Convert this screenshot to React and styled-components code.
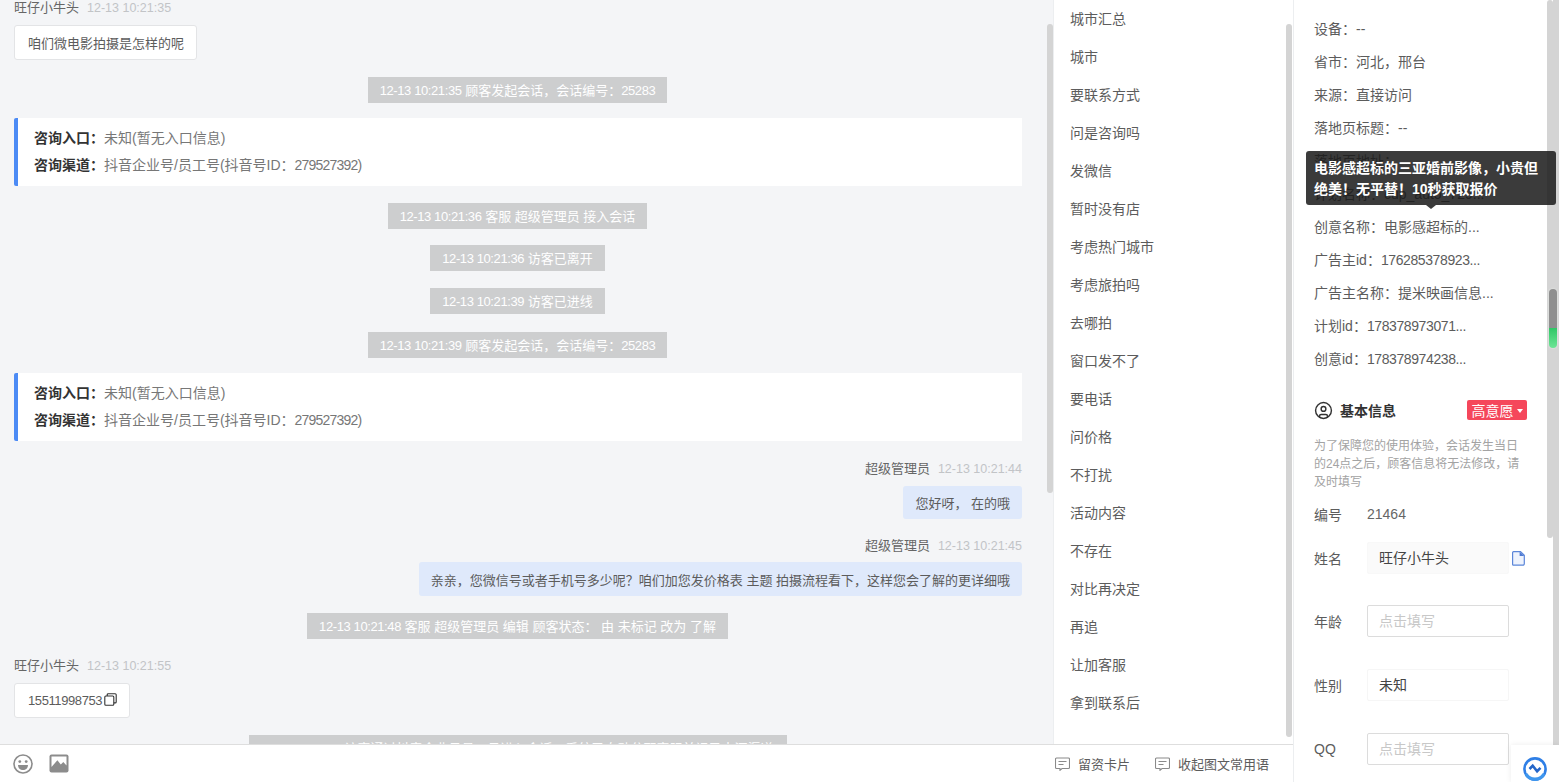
import React from "react";
import styled, { createGlobalStyle } from "styled-components";
import { CircleUser } from "lucide-react";

const GlobalStyle = createGlobalStyle`
  html, body {
    margin: 0;
    padding: 0;
    height: 100%;
    overflow: hidden;
    background: #fff;
  }
  * {
    box-sizing: border-box;
  }
  body {
    font-family: "Liberation Sans", "Noto Sans CJK SC", sans-serif;
    color: #5c5c5c;
  }
`;

const QUICK_PHRASES = [
  "城市汇总", "城市", "要联系方式", "问是咨询吗", "发微信", "暂时没有店", "考虑热门城市", "考虑旅拍吗", "去哪拍",
  "窗口发不了", "要电话", "问价格", "不打扰", "活动内容", "不存在", "对比再决定", "再追", "让加客服", "拿到联系后",
];

const SOURCE_INFO = [
  ["设备：", "--"],
  ["省市：", "河北，邢台"],
  ["来源：", "直接访问"],
  ["落地页标题：", "--"],
  ["落地页地址：", ""],
  ["计划名称：", "cup_auto_729..."],
  ["创意名称：", "电影感超标的..."],
  ["广告主id：", "176285378923...", true],
  ["广告主名称：", "提米映画信息..."],
  ["计划id：", "178378973071...", true],
  ["创意id：", "178378974238...", true],
];

const Page = styled.div`
  position: relative;
  display: flex;
  width: 1559px;
  height: 782px;
  overflow: hidden;
`;

const Workspace = styled.div`
  display: flex;
  flex-direction: column;
  width: 1293px;
  height: 100%;
`;

const TopRow = styled.div`
  display: flex;
  height: 744px;
`;

const Chat = styled.div`
  width: 1047px;
  height: 100%;
  padding: 0 25px 0 14px;
  overflow: hidden;
  background: #f4f5f7;
  display: flex;
  flex-direction: column;
  align-items: flex-start;
`;

const Rail = styled.div`
  flex: none;
  width: 6px;
  height: 100%;
  padding-top: ${(p) => p.$top || 0}px;
  background: ${(p) => p.$bg || "#fff"};
`;

const Thumb = styled.div`
  height: ${(p) => p.$h}px;
  background: #d4d4d4;
  border-radius: ${(p) => p.$radius ?? 3}px;
`;

const Num = styled.span`
  letter-spacing: ${(p) => (p.$tight ? "-0.8px" : "-0.4px")};
`;

const Sender = styled.div`
  flex: none;
  display: flex;
  gap: 8px;
  height: 16px;
  line-height: 16px;
  margin-top: ${(p) => p.$mt || 0}px;
  align-self: ${(p) => (p.$mine ? "flex-end" : "flex-start")};
  font-size: 13px;
  color: #666;
`;

const Stamp = styled.span`
  font-size: 12.5px;
  color: #c2c4c7;
`;

const Bubble = styled.div`
  flex: none;
  display: flex;
  align-items: center;
  height: ${(p) => p.$h || 35}px;
  margin-top: ${(p) => p.$mt || 9}px;
  padding: ${(p) => (p.$mine ? "0 12px" : "0 12px 0 13px")};
  font-size: 13px;
  white-space: pre;
  color: #5c5c5c;
  border-radius: 3px;
  background: ${(p) => (p.$mine ? "#dfe9fb" : "#fff")};
  border: ${(p) => (p.$mine ? "none" : "1px solid #e3e4e6")};
  align-self: ${(p) => (p.$mine ? "flex-end" : "flex-start")};
`;

const SystemPill = styled.div`
  flex: none;
  align-self: center;
  height: 26px;
  line-height: 27px;
  margin-top: ${(p) => p.$mt || 16}px;
  margin-left: -1px;
  padding: 0 12px;
  font-size: 13px;
  white-space: pre;
  color: #fff;
  background: #cdcecf;
`;

const LastPill = styled(SystemPill)`
  width: 538px;
  padding-left: 96px;
`;

const EntryCard = styled.div`
  flex: none;
  width: 100%;
  height: 68px;
  margin-top: 15px;
  padding: 7px 0 0 16px;
  background: #fff;
  border-left: 4px solid #4c8bf5;
  border-radius: 2px 0 0 2px;
`;

const EntryLine = styled.div`
  height: 27px;
  line-height: 27px;
  font-size: 14px;
  white-space: pre;
  color: #777;
`;

const EntryLabel = styled.b`
  font-weight: 700;
  color: #333;
`;

const PhraseList = styled.div`
  width: 233px;
  height: 100%;
  padding-left: 16px;
  background: #fff;
  border-left: 1px solid #eceef0;
  overflow: hidden;
`;

const Phrase = styled.div`
  height: 38px;
  line-height: 38px;
  font-size: 14px;
  color: #5c5c5c;
`;

const BottomBar = styled.div`
  flex: 1;
  display: flex;
  align-items: center;
  padding: 0 24px 0 13px;
  background: #fff;
  border-top: 1px solid #dedede;
`;

const MediaTools = styled.div`
  display: flex;
  align-items: center;
  gap: 16px;
`;

const ToolLink = styled.div`
  display: flex;
  align-items: center;
  gap: 8px;
  margin-left: ${(p) => p.$ml || 0}px;
  font-size: 13px;
  color: #5c5c5c;
  white-space: nowrap;
`;

const Spacer = styled.div`
  flex: 1;
`;

const RightArea = styled.div`
  display: flex;
  width: 266px;
  height: 100%;
`;

const InfoPanel = styled.div`
  width: 254px;
  height: 100%;
  padding: 13px 0 0 20px;
  background: #fff;
  border-left: 1px solid #eceef0;
  overflow: hidden;
`;

const InfoRow = styled.div`
  height: 33px;
  line-height: 33px;
  font-size: 14px;
  white-space: pre;
  color: #5c5c5c;
`;

const SectionHead = styled.div`
  display: flex;
  align-items: center;
  width: 213px;
  height: 20px;
  margin-top: 24px;
`;

const SectionTitle = styled.div`
  flex: 1;
  margin-left: 7px;
  font-size: 14px;
  font-weight: 700;
  color: #333;
`;

const IntentTag = styled.div`
  display: flex;
  align-items: center;
  justify-content: center;
  gap: 3px;
  width: 60px;
  height: 20px;
  font-size: 14px;
  color: #fff;
  background: #f5475b;
  border-radius: 2px;
`;

const Caret = styled.span`
  width: 0;
  height: 0;
  margin-top: 1px;
  border-left: 3.5px solid transparent;
  border-right: 3.5px solid transparent;
  border-top: 4px solid #fff;
`;

const Note = styled.div`
  width: 213px;
  margin-top: 17px;
  font-size: 12px;
  line-height: 18px;
  color: #a3a3a3;
`;

const FieldRow = styled.div`
  display: flex;
  align-items: center;
  height: ${(p) => p.$h || 32}px;
  margin-top: ${(p) => p.$mt}px;
  font-size: 14px;
  color: #5c5c5c;
`;

const FieldLabel = styled.div`
  width: 53px;
  flex: none;
`;

const FieldBox = styled.div`
  width: 142px;
  height: 32px;
  line-height: 30px;
  padding-left: 11px;
  border-radius: 2px;
  border: 1px solid ${(p) => p.$line};
  background: ${(p) => p.$fill || "#fff"};
  color: ${(p) => (p.$empty ? "#c8c8c8" : "#444")};
`;

const PlainValue = styled.div`
  color: #666;
`;

const DocIcon = styled.svg`
  width: 13px;
  height: 15px;
  margin-left: 3px;
`;

const CopyIcon = styled.svg`
  flex: none;
  width: 13px;
  height: 13px;
  margin: -3px 0 0 2px;
`;

const GreenGauge = styled.div`
  position: absolute;
  left: 1549px;
  top: 289px;
  width: 8px;
  height: 59px;
  border-radius: 4px;
  box-shadow: 0 0 2px #eef5ef;
  background: linear-gradient(#8f8f8f 0, #8f8f8f 39px, #2fc766 39px, #6ee596 100%);
`;

const Tooltip = styled.div`
  position: absolute;
  left: 1306px;
  top: 151px;
  width: 250px;
  height: 54px;
  padding: 7px 14px 0 8px;
  font-size: 14px;
  font-weight: 700;
  line-height: 21px;
  color: #fff;
  background: rgba(25, 25, 25, 0.85);
  border-radius: 3px;
  &::after {
    content: "";
    position: absolute;
    left: 120px;
    bottom: -4px;
    border-left: 5px solid transparent;
    border-right: 5px solid transparent;
    border-top: 4px solid rgba(25, 25, 25, 0.85);
  }
`;

const ChatWidget = styled.div`
  position: absolute;
  left: 1511px;
  top: 745px;
  width: 48px;
  height: 37px;
  display: flex;
  align-items: flex-start;
  justify-content: center;
  padding-top: 12px;
  background: #fff;
  box-shadow: 0 0 6px rgba(0, 0, 0, 0.08);
`;

const EmojiIcon = () => (
  <svg width="20" height="20" viewBox="0 0 20 20">
    <circle cx="10" cy="10" r="9" fill="none" stroke="#8c8c8c" strokeWidth="1.6" />
    <circle cx="6.8" cy="7.6" r="1.4" fill="#8c8c8c" />
    <circle cx="13.2" cy="7.6" r="1.4" fill="#8c8c8c" />
    <path d="M5 11h10c0 3-2.2 5-5 5s-5-2-5-5z" fill="#8c8c8c" />
  </svg>
);

const PictureIcon = () => (
  <svg width="20" height="19" viewBox="0 0 20 19">
    <rect x="0.5" y="0.5" width="19" height="18" rx="2" fill="#8c8c8c" />
    <path d="M2.5 2.5h15v9l-3.2-3.4-2.5 2.4-3.4-4.2-5.9 6.6z" fill="#fff" />
  </svg>
);

const NoteIcon = () => (
  <svg width="15" height="14" viewBox="0 0 15 14" fill="none" stroke="#8a8a8a" strokeWidth="1.1">
    <path d="M1.5 1h12a1 1 0 0 1 1 1v8.5a1 1 0 0 1-1 1H7l-2 1.8v-1.8H1.5a1 1 0 0 1-1-1V2a1 1 0 0 1 1-1z" />
    <path d="M3.5 4.5h8M3.5 7.5h5" />
  </svg>
);

const WidgetLogo = () => (
  <svg width="24" height="24" viewBox="0 0 24 24" fill="none">
    <circle cx="12" cy="12" r="10.6" stroke="#2f7fe6" strokeWidth="2.6" />
    <path d="M3 17a10.4 10.4 0 0 0 18 0" stroke="#3f97ee" strokeWidth="3.4" />
    <path d="M6.5 12l3.2-3.2 4.4 5.4 3.4-3.4" stroke="#2466c9" strokeWidth="2.6" />
  </svg>
);

const InfoSection = () => (
  <InfoPanel>
    {SOURCE_INFO.map(([label, value, numeric]) => (
      <InfoRow key={label}>{label}{numeric ? <Num>{value}</Num> : value}</InfoRow>
    ))}
    <SectionHead>
      <CircleUser size={19} color="#333" strokeWidth={1.8} />
      <SectionTitle>基本信息</SectionTitle>
      <IntentTag>高意愿<Caret /></IntentTag>
    </SectionHead>
    <Note>为了保障您的使用体验，会话发生当日的24点之后，顾客信息将无法修改，请及时填写</Note>
    <FieldRow $h={20} $mt={13}>
      <FieldLabel>编号</FieldLabel>
      <PlainValue>21464</PlainValue>
    </FieldRow>
    <FieldRow $mt={18}>
      <FieldLabel>姓名</FieldLabel>
      <FieldBox $line="#f8f8f8" $fill="#fafafa">旺仔小牛头</FieldBox>
      <DocIcon viewBox="0 0 13 15">
        <path d="M1.5.7h7l3.8 3.6v8.5a1.4 1.4 0 0 1-1.4 1.4H1.5A1 1 0 0 1 .6 13V1.6A1 1 0 0 1 1.5.7z" fill="#eef3fd" stroke="#5b86d9" strokeWidth="1.2" />
        <path d="M7.6.7l4.7 4.4H7.6z" fill="#4f7bd3" />
      </DocIcon>
    </FieldRow>
    <FieldRow $mt={31}>
      <FieldLabel>年龄</FieldLabel>
      <FieldBox $line="#dcdcdc" $empty>点击填写</FieldBox>
    </FieldRow>
    <FieldRow $mt={32}>
      <FieldLabel>性别</FieldLabel>
      <FieldBox $line="#f6f6f6">未知</FieldBox>
    </FieldRow>
    <FieldRow $mt={32}>
      <FieldLabel>QQ</FieldLabel>
      <FieldBox $line="#dcdcdc" $empty>点击填写</FieldBox>
    </FieldRow>
  </InfoPanel>
);

const EntryInfo = () => (
  <EntryCard>
    <EntryLine><EntryLabel>咨询入口：</EntryLabel>未知(暂无入口信息)</EntryLine>
    <EntryLine><EntryLabel>咨询渠道：</EntryLabel>抖音企业号/员工号(抖音号ID：<Num $tight>279527392</Num>)</EntryLine>
  </EntryCard>
);

export default function App() {
  return (
    <>
      <GlobalStyle />
      <Page>
        <Workspace>
          <TopRow>
            <Chat>
              <Sender>旺仔小牛头<Stamp>12-13 10:21:35</Stamp></Sender>
              <Bubble>咱们微电影拍摄是怎样的呢</Bubble>
              <SystemPill $mt={17}><Num>12-13 10:21:35</Num> 顾客发起会话，会话编号：<Num>25283</Num></SystemPill>
              <EntryInfo />
              <SystemPill $mt={17}><Num>12-13 10:21:36</Num> 客服 超级管理员 接入会话</SystemPill>
              <SystemPill><Num>12-13 10:21:36</Num> 访客已离开</SystemPill>
              <SystemPill $mt={17}><Num>12-13 10:21:39</Num> 访客已进线</SystemPill>
              <SystemPill $mt={18}><Num>12-13 10:21:39</Num> 顾客发起会话，会话编号：<Num>25283</Num></SystemPill>
              <EntryInfo />
              <Sender $mine $mt={20}>超级管理员<Stamp>12-13 10:21:44</Stamp></Sender>
              <Bubble $mine $h={33}>您好呀， 在的哦</Bubble>
              <Sender $mine $mt={19}>超级管理员<Stamp>12-13 10:21:45</Stamp></Sender>
              <Bubble $mine $h={34} $mt={8}>亲亲，您微信号或者手机号多少呢？咱们加您发价格表 主题 拍摄流程看下，这样您会了解的更详细哦</Bubble>
              <SystemPill $mt={17}><Num>12-13 10:21:48</Num> 客服 超级管理员 编辑 顾客状态： 由 未标记 改为 了解</SystemPill>
              <Sender $mt={19}>旺仔小牛头<Stamp>12-13 10:21:55</Stamp></Sender>
              <Bubble>
                <Num>15511998753</Num>
                <CopyIcon viewBox="0 0 13 13" fill="none" stroke="#333" strokeWidth="1.1">
                  <rect x="0.8" y="3" width="9" height="9.3" rx="1" />
                  <path d="M3.2 3V1.7a1 1 0 0 1 1-1h7a1 1 0 0 1 1 1v7.2a1 1 0 0 1-1 1H9.8" />
                </CopyIcon>
              </Bubble>
              <LastPill $mt={17}>访客通过抖音企业号员工号进入会话，系统已自动分配客服并记录来源渠道</LastPill>
            </Chat>
            <Rail $top={24} $bg="#f4f5f7"><Thumb $h={469} /></Rail>
            <PhraseList>
              {QUICK_PHRASES.map((phrase) => (
                <Phrase key={phrase}>{phrase}</Phrase>
              ))}
            </PhraseList>
            <Rail $top={24}><Thumb $h={713} /></Rail>
          </TopRow>
          <BottomBar>
            <MediaTools>
              <EmojiIcon />
              <PictureIcon />
            </MediaTools>
            <Spacer />
            <ToolLink><NoteIcon />留资卡片</ToolLink>
            <ToolLink $ml={25}><NoteIcon />收起图文常用语</ToolLink>
          </BottomBar>
        </Workspace>
        <RightArea>
          <InfoSection />
          <Rail><Thumb $h={538} /></Rail>
          <Rail><Thumb $h={745} $radius={0} /></Rail>
        </RightArea>
        <GreenGauge />
        <Tooltip>电影感超标的三亚婚前影像，小贵但绝美！无平替！10秒获取报价</Tooltip>
        <ChatWidget><WidgetLogo /></ChatWidget>
      </Page>
    </>
  );
}
